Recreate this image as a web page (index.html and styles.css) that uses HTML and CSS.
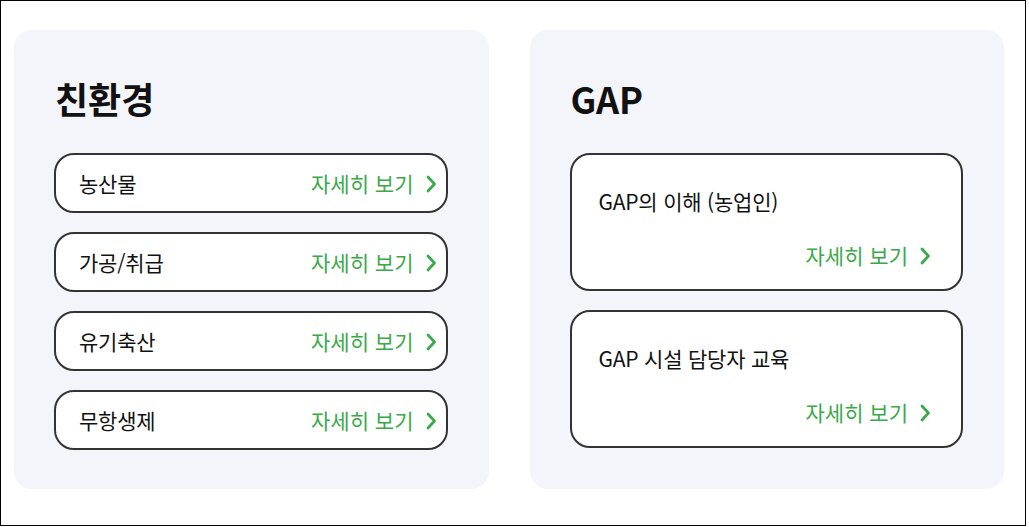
FILE: index.html
```html
<!DOCTYPE html>
<html lang="ko">
<head>
<meta charset="utf-8">
<title>교육 안내</title>
<link rel="stylesheet" href="styles.css">
</head>
<body>
<div class="frame">
  <section class="panel">
    <h2 class="panel-title">친환경</h2>
    <ul class="rows">
      <li class="row"><span class="row-label">농산물</span><a class="more" href="#">자세히 보기<svg class="chev" viewBox="0 0 12 18" width="12" height="18"><path d="M3 2 L9.5 9 L3 16" fill="none" stroke="currentColor" stroke-width="2.7" stroke-linecap="round" stroke-linejoin="round"/></svg></a></li>
      <li class="row"><span class="row-label">가공/취급</span><a class="more" href="#">자세히 보기<svg class="chev" viewBox="0 0 12 18" width="12" height="18"><path d="M3 2 L9.5 9 L3 16" fill="none" stroke="currentColor" stroke-width="2.7" stroke-linecap="round" stroke-linejoin="round"/></svg></a></li>
      <li class="row"><span class="row-label">유기축산</span><a class="more" href="#">자세히 보기<svg class="chev" viewBox="0 0 12 18" width="12" height="18"><path d="M3 2 L9.5 9 L3 16" fill="none" stroke="currentColor" stroke-width="2.7" stroke-linecap="round" stroke-linejoin="round"/></svg></a></li>
      <li class="row"><span class="row-label">무항생제</span><a class="more" href="#">자세히 보기<svg class="chev" viewBox="0 0 12 18" width="12" height="18"><path d="M3 2 L9.5 9 L3 16" fill="none" stroke="currentColor" stroke-width="2.7" stroke-linecap="round" stroke-linejoin="round"/></svg></a></li>
    </ul>
  </section>
  <section class="panel">
    <h2 class="panel-title">GAP</h2>
    <ul class="cards">
      <li class="card"><span class="card-label">GAP의 이해 (농업인)</span><a class="more" href="#">자세히 보기<svg class="chev" viewBox="0 0 12 18" width="12" height="18"><path d="M3 2 L9.5 9 L3 16" fill="none" stroke="currentColor" stroke-width="2.7" stroke-linecap="round" stroke-linejoin="round"/></svg></a></li>
      <li class="card"><span class="card-label">GAP 시설 담당자 교육</span><a class="more" href="#">자세히 보기<svg class="chev" viewBox="0 0 12 18" width="12" height="18"><path d="M3 2 L9.5 9 L3 16" fill="none" stroke="currentColor" stroke-width="2.7" stroke-linecap="round" stroke-linejoin="round"/></svg></a></li>
    </ul>
  </section>
</div>
</body>
</html>
```
FILE: styles.css
```css
* { box-sizing: border-box; }
html, body { margin: 0; padding: 0; background: #fff; }
body {
  font-family: "Noto Sans CJK KR", "Noto Sans", sans-serif;
  color: #111;
}
.frame {
  width: 1026px;
  height: 526px;
  border: 1px solid #000;
  padding: 29px 21px 0 13px;
  display: flex;
  gap: 41px;
}
.panel {
  width: 475px;
  height: 459px;
  background: #f4f5fa;
  border-radius: 18px;
  padding: 44px 41px 0 40px;
}
.panel-title {
  margin: 0 0 0 1px;
  font-size: 36px;
  font-weight: 700;
  line-height: 48px;
  letter-spacing: 0;
}
.rows, .cards {
  list-style: none;
  margin: 31px 0 0 0;
  padding: 0;
  display: flex;
  flex-direction: column;
  gap: 19px;
}
.row {
  height: 60px;
  border: 2px solid #333;
  border-radius: 20px;
  background: #fff;
  display: flex;
  align-items: center;
  justify-content: space-between;
  padding: 0 9px 0 23px;
}
.row-label, .card-label {
  font-size: 21px;
  line-height: 28px;
  color: #111;
  letter-spacing: -0.2px;
}
.more {
  display: flex;
  align-items: center;
  gap: 11px;
  color: #3aa94a;
  text-decoration: none;
  font-size: 21px;
  line-height: 28px;
  letter-spacing: 0;
}
.chev { display: block; margin-top: 2px; }
.card {
  height: 138px;
  border: 2px solid #333;
  border-radius: 20px;
  background: #fff;
  display: flex;
  flex-direction: column;
  justify-content: space-between;
  padding: 32px 30px 20px 27px;
}
.card .more { align-self: flex-end; }
```
